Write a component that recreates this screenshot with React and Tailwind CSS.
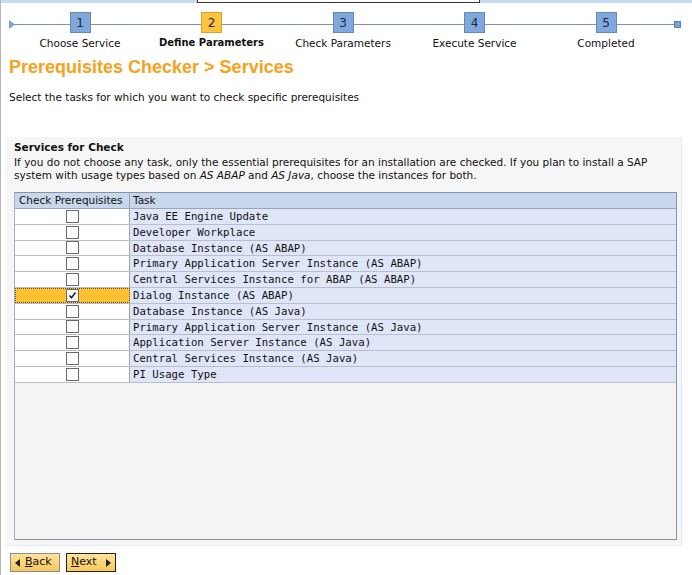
import React from "react";

const steps = [
  { n: 1, label: "Choose Service" },
  { n: 2, label: "Define Parameters", active: true },
  { n: 3, label: "Check Parameters" },
  { n: 4, label: "Execute Service" },
  { n: 5, label: "Completed" },
];

const tasks = [
  "Java EE Engine Update",
  "Developer Workplace",
  "Database Instance (AS ABAP)",
  "Primary Application Server Instance (AS ABAP)",
  "Central Services Instance for ABAP (AS ABAP)",
  "Dialog Instance (AS ABAP)",
  "Database Instance (AS Java)",
  "Primary Application Server Instance (AS Java)",
  "Application Server Instance (AS Java)",
  "Central Services Instance (AS Java)",
  "PI Usage Type",
];

const dv = { fontFamily: '"DejaVu Sans", Verdana, sans-serif' };

function Checkbox({ checked }) {
  return (
    <div className="w-[13px] h-[13px] border border-[#6b6b6b] bg-white flex items-center justify-center">
      {checked && (
        <svg width="9" height="9" viewBox="0 0 9 9">
          <path d="M1.5 4.5 L3.5 6.8 L7.5 1.5" fill="none" stroke="#222" strokeWidth="1.6" />
        </svg>
      )}
    </div>
  );
}

function Wizard() {
  return (
    <div className="relative h-[46px] mt-[9px]">
      <div className="absolute left-[10px] right-[14px] top-[12px] h-px bg-[#7d93b3]" />
      <svg className="absolute left-[9px] top-[8px]" width="6" height="9" viewBox="0 0 6 9">
        <path d="M0 0 L6 4.5 L0 9 Z" fill="#7ea3d3" />
      </svg>
      <div className="absolute right-[11px] top-[9px] w-[7px] h-[7px] bg-[#7ea3d3] border border-[#5f82b2]" />
      {steps.map((s, i) => (
        <div
          key={s.n}
          className="absolute top-0 flex flex-col items-center w-[130px] -translate-x-1/2"
          style={{ left: 80 + i * 131.5 }}
        >
          <div
            className={
              "w-[21px] h-[21px] border flex items-center justify-center text-[12px] text-[#1b2a3d] " +
              (s.active ? "bg-[#fcc33c] border-[#d9a22a]" : "bg-[#80a8dc] border-[#6389bb]")
            }
            style={dv}
          >
            {s.n}
          </div>
          <div
            className={
              "mt-[2px] text-[10.5px] leading-[16px] text-[#111] whitespace-nowrap " +
              (s.active ? "font-bold text-[10px]" : "")
            }
            style={dv}
          >
            {s.label}
          </div>
        </div>
      ))}
    </div>
  );
}

export default function App() {
  return (
    <div
      className="w-[692px] h-[575px] bg-white relative overflow-hidden text-[#111]"
      style={dv}
    >
      {/* top strip */}
      <div className="h-[3px] flex">
        <div className="w-[197px] bg-[#c7dbf1]" />
        <div className="w-[283px] border-x border-b border-[#333] bg-white" />
        <div className="flex-1 bg-[#c7dbf1]" />
      </div>
      <div className="absolute left-0 top-0 bottom-0 w-px bg-[#b5b5b5]" />

      <Wizard />

      <h1
        className="ml-[9px] -mt-[2px] text-[18px] leading-[22px] font-bold text-[#f7a21b]"
        style={{ fontFamily: '"Liberation Sans", Arial, sans-serif' }}
      >
        Prerequisites Checker &gt; Services
      </h1>
      <p className="ml-[9px] mt-[12px] text-[10.5px] leading-[14px]">
        Select the tasks for which you want to check specific prerequisites
      </p>

      {/* panel */}
      <div className="ml-[5px] mr-[10px] mt-[33px] h-[409px] bg-[#f6f6f6] border-r border-b border-[#e2ebf5] px-[9px] pt-[4px]">
        <div className="text-[10.5px] leading-[13px] font-bold">Services for Check</div>
        <p className="text-[10.5px] leading-[13px] mt-[2px] whitespace-nowrap">
          If you do not choose any task, only the essential prerequisites for an installation are checked. If you plan to install a SAP
          <br />
          system with usage types based on <i>AS ABAP</i> and <i>AS Java</i>, choose the instances for both.
        </p>

        <div className="mt-[10px] w-[663px] h-[348px] border border-[#8a93a3] border-l-[#9fb2cc] bg-[#f4f4f4]">
          <div className="flex h-[16px] bg-[#c9d7ec] border-b border-[#9aa6b8] text-[10.5px] leading-[15px]">
            <div className="w-[115px] pl-[4px] border-r border-[#9aa6b8] whitespace-nowrap">Check Prerequisites</div>
            <div className="flex-1 pl-[3px]">Task</div>
          </div>
          {tasks.map((t, i) => {
            const sel = i === 5;
            return (
              <div key={t} className="flex h-[15.8px] border-b border-[#b9bfcc]">
                <div
                  className={
                    "w-[115px] flex items-center justify-center " +
                    (sel ? "bg-[#fdc02f] border border-dotted border-[#555]" : "bg-white border-r border-[#9aa6b8]")
                  }
                >
                  <Checkbox checked={sel} />
                </div>
                <div
                  className="flex-1 pl-[3px] bg-[#dfe6f8] text-[10.7px] leading-[15px] text-[#111] whitespace-nowrap"
                  style={{ fontFamily: '"DejaVu Sans Mono", monospace' }}
                >
                  {t}
                </div>
              </div>
            );
          })}
        </div>
      </div>

      {/* buttons */}
      <div className="flex gap-[6px] ml-[10px] mt-[7px]">
        <button className="h-[19px] w-[50px] flex items-center gap-[5px] px-[4px] border border-[#8d8d8d] bg-gradient-to-b from-[#ffe39a] to-[#f9c75a] text-[11px] text-[#111]">
          <svg width="5" height="8" viewBox="0 0 5 8">
            <path d="M5 0 L0 4 L5 8 Z" fill="#222" />
          </svg>
          <span>
            <span className="underline">B</span>ack
          </span>
        </button>
        <button className="h-[19px] w-[50px] flex items-center justify-between px-[4px] border border-[#222] bg-gradient-to-b from-[#ffe39a] to-[#f9c75a] text-[11px] text-[#111]">
          <span>
            <span className="underline">N</span>ext
          </span>
          <svg width="5" height="8" viewBox="0 0 5 8">
            <path d="M0 0 L5 4 L0 8 Z" fill="#222" />
          </svg>
        </button>
      </div>
    </div>
  );
}
